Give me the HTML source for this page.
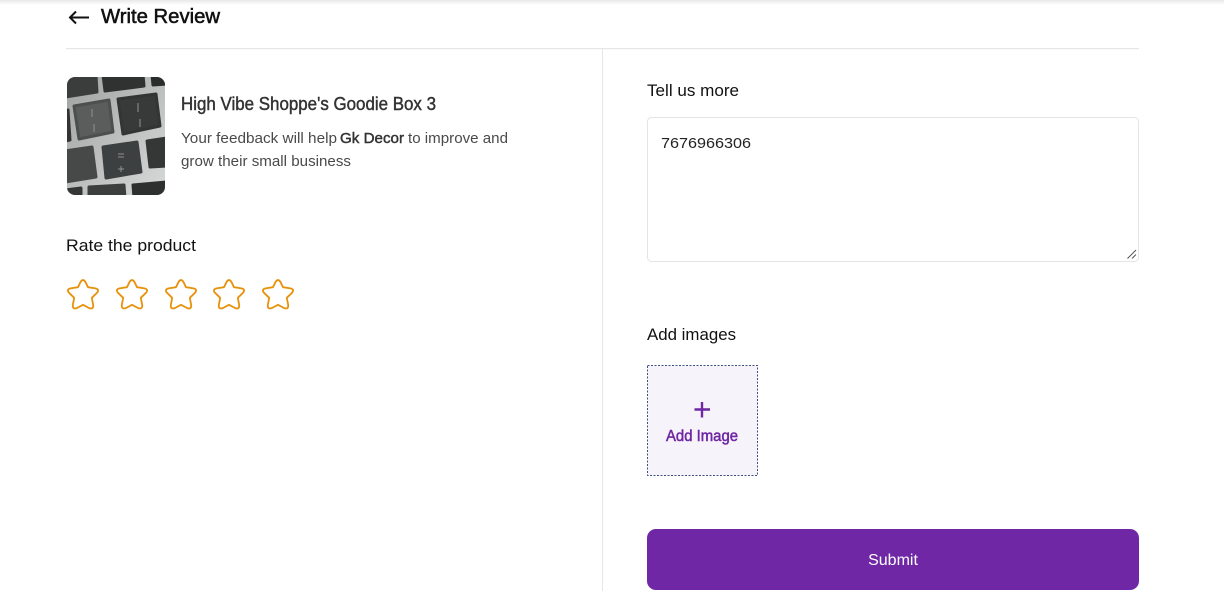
<!DOCTYPE html>
<html lang="en">
<head>
<meta charset="utf-8">
<title>Write Review</title>
<style>
html,body{margin:0;padding:0;width:1224px;height:600px;overflow:hidden;background:#fff}
svg{display:block;position:absolute;left:0;top:0}
text{font-family:"Liberation Sans",Arial,sans-serif;white-space:pre}
.s{fill:none;stroke:#e8920c;stroke-width:1.8;stroke-linejoin:round}
</style>
</head>
<body>
<svg width="1224" height="600" viewBox="0 0 1224 600" xmlns="http://www.w3.org/2000/svg">
<defs>
<linearGradient id="top" x1="0" y1="0" x2="0" y2="1"><stop offset="0" stop-color="#e8e8e8"/><stop offset="1" stop-color="#fff"/></linearGradient>
<linearGradient id="bg" x1="0" y1="0" x2="1" y2="1"><stop offset="0" stop-color="#a0a2a2"/><stop offset="1" stop-color="#d8d9d9"/></linearGradient>
<clipPath id="c"><rect x="67" y="77" width="98" height="118" rx="8"/></clipPath>
<path id="star" class="s" d="M-2.3,-12.3 Q0,-15.6 2.3,-12.3 L5,-6.8 L12.5,-5.6 Q16.8,-4.6 14,-1.2 L8.8,3.8 L10.2,11 Q10.5,15.8 6,14 L0,10.8 L-6,14 Q-10.5,15.8 -10.2,11 L-8.8,3.8 L-14,-1.2 Q-16.8,-4.6 -12.5,-5.6 L-5,-6.8 Z"/>
</defs>
<rect x="0" y="0" width="1224" height="5" fill="url(#top)"/>

<path d="M70,17.5H89M76,11.5L70,17.5L76,23.5" fill="none" stroke="#111" stroke-width="2"/>
<text x="101" y="23" font-size="20" fill="#111" stroke="#111" stroke-width=".55" textLength="119" lengthAdjust="spacingAndGlyphs">Write Review</text>
<rect x="66" y="48" width="1073" height="1.2" fill="#e6e6e6"/>
<rect x="602" y="49" width="1" height="542" fill="#e6e6e6"/>

<g clip-path="url(#c)">
<rect x="67" y="77" width="98" height="118" fill="url(#bg)"/>
<g stroke-width="3" stroke-linejoin="round">
<path d="M65,79L96,76L97,92L65,97Z" fill="#3b3d3d" stroke="#3b3d3d"/>
<path d="M103,75L143,75L144,86L105,91Z" fill="#303232" stroke="#303232"/>
<path d="M152,75H167V84L153,85Z" fill="#2b2c2c" stroke="#2b2c2c"/>
<path d="M74,106L109,100L113,132L79,139Z" fill="#5a5d5b" stroke="#4c4f4e"/>
<path d="M118,99L156,94L160,126L123,134Z" fill="#383a3a" stroke="#333535"/>
<path d="M65,110L68,110L70,140L65,141Z" fill="#333" stroke="#333"/>
<path d="M65,151L92,147L96,177L65,182Z" fill="#464948" stroke="#464948"/>
<path d="M103,147L137,142L141,172L106,178Z" fill="#3d4040" stroke="#3d4040"/>
<path d="M147,141L167,138V166L150,167Z" fill="#353737" stroke="#353737"/>
<path d="M65,190L81,188V198H65Z" fill="#343636" stroke="#343636"/>
<path d="M89,187L124,185L125,198H89Z" fill="#3d3f3f" stroke="#3d3f3f"/>
<path d="M133,185L167,182V198H134Z" fill="#2e3030" stroke="#2e3030"/>
</g>
<g stroke="#8f9191" stroke-width="1" fill="none">
<path d="M92,109V117M94,124V132"/>
<path d="M138,103V112M140,119V127"/>
<path d="M118,154H124M118,157H124M118,169H124M121,166V172"/>
</g>
</g>

<text x="181" y="110" font-size="18" fill="#333" stroke="#333" stroke-width=".45" textLength="255" lengthAdjust="spacingAndGlyphs">High Vibe Shoppe's Goodie Box 3</text>
<text x="181" y="143" font-size="15" fill="#4a4a4a" textLength="156" lengthAdjust="spacingAndGlyphs">Your feedback will help</text>
<text x="340" y="143" font-size="15" fill="#333" stroke="#333" stroke-width=".45" textLength="64" lengthAdjust="spacingAndGlyphs">Gk Decor</text>
<text x="408" y="143" font-size="15" fill="#4a4a4a" textLength="100" lengthAdjust="spacingAndGlyphs">to improve and</text>
<text x="181" y="166" font-size="15" fill="#4a4a4a" textLength="170" lengthAdjust="spacingAndGlyphs">grow their small business</text>

<text x="66" y="251" font-size="17" fill="#111" textLength="130" lengthAdjust="spacingAndGlyphs">Rate the product</text>
<use href="#star" x="83" y="294"/>
<use href="#star" x="132" y="294"/>
<use href="#star" x="181" y="294"/>
<use href="#star" x="229" y="294"/>
<use href="#star" x="278" y="294"/>

<text x="647" y="96" font-size="17" fill="#111" textLength="92" lengthAdjust="spacingAndGlyphs">Tell us more</text>
<rect x="647.5" y="117.5" width="491" height="144" rx="4" fill="#fff" stroke="#e4e4e4"/>
<text x="661" y="148" font-size="15" fill="#222" textLength="90" lengthAdjust="spacingAndGlyphs">7676966306</text>
<path d="M1127.5,258.5L1136,250M1132,258.5L1136,254.5" stroke="#555" stroke-width="1" fill="none"/>

<text x="647" y="340" font-size="17" fill="#111" textLength="89" lengthAdjust="spacingAndGlyphs">Add images</text>
<rect x="647.5" y="365.5" width="110" height="110" fill="#f7f3fa" stroke="#3d4f80" stroke-width="1" stroke-dasharray="2 1.5"/>
<path d="M702,402V417.5M694.5,409.5H710" stroke="#6f27a4" stroke-width="2.4" fill="none"/>
<text x="666" y="441" font-size="15.5" fill="#6f27a4" stroke="#6f27a4" stroke-width=".5" textLength="72" lengthAdjust="spacingAndGlyphs">Add Image</text>

<rect x="647" y="529" width="492" height="61" rx="9" fill="#7027a6"/>
<text x="893" y="565" font-size="16" fill="#fff" text-anchor="middle">Submit</text>
</svg>
</body>
</html>
